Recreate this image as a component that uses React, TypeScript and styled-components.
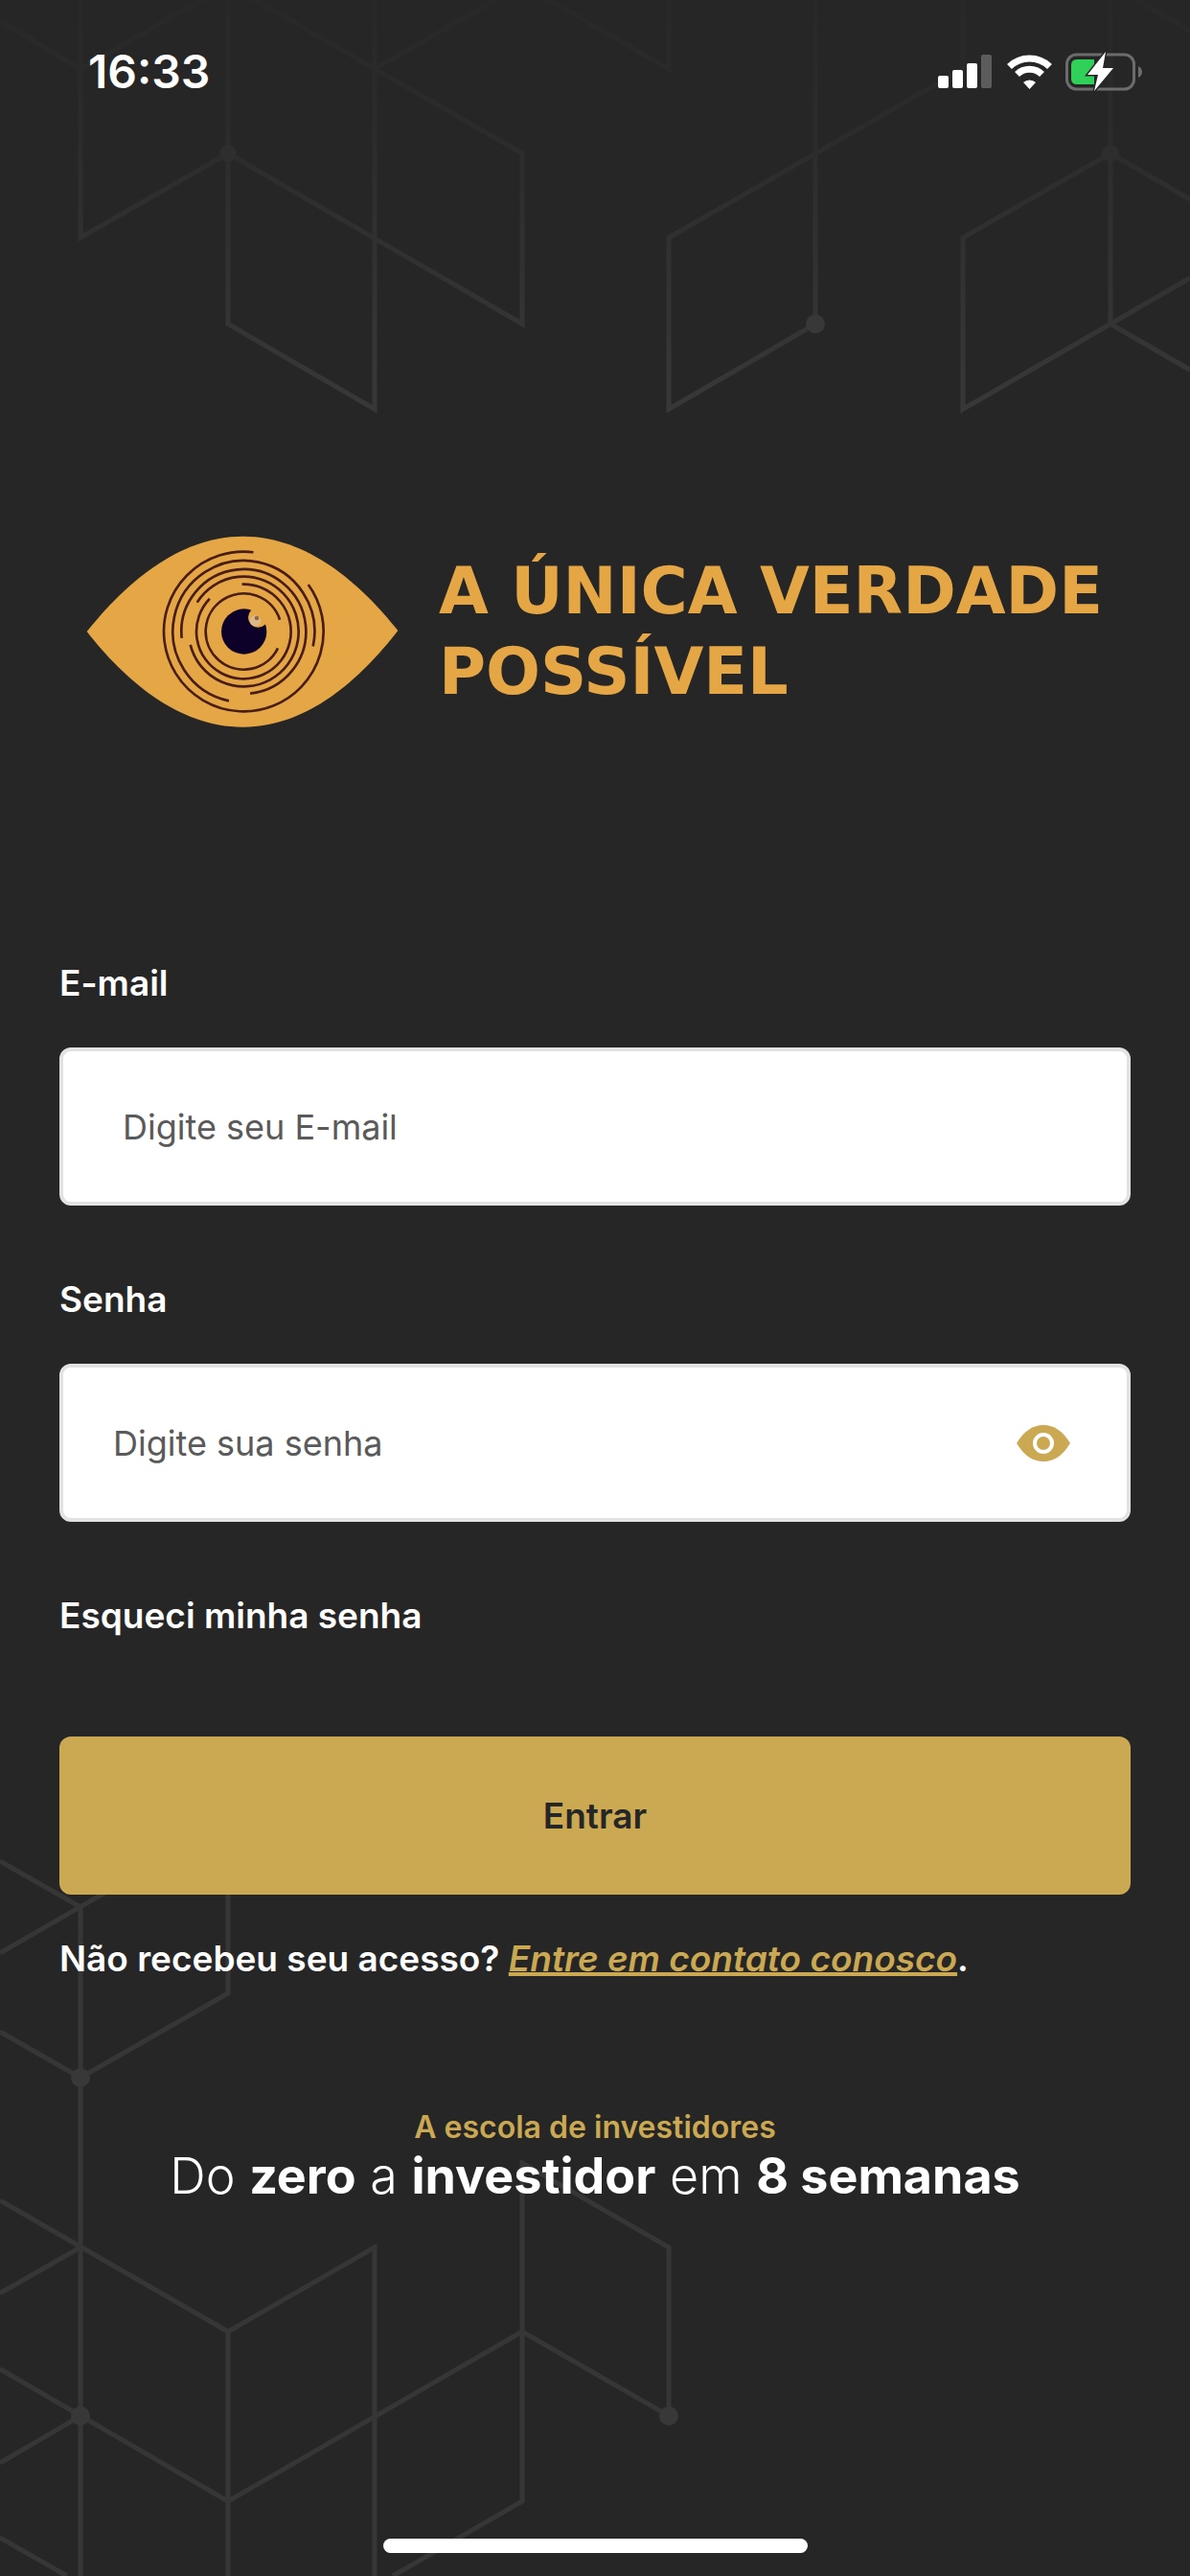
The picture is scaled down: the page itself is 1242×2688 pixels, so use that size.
import React, { useState } from "react";
import styled, { createGlobalStyle } from "styled-components";

const gold = "#cba852";
const logoGold = "#e5a746";
const ink = "#262626";

const GlobalStyle = createGlobalStyle`
  * { box-sizing: border-box; }
  body {
    margin: 0;
    background: ${ink};
    color: #fff;
    font-family: Inter, "Liberation Sans", sans-serif;
  }
`;

const Screen = styled.div`
  position: relative;
  display: flex;
  flex-direction: column;
  min-height: 100vh;
  overflow: hidden;
`;

const Pattern = styled.svg<{ $edge: "top" | "bottom" }>`
  position: absolute;
  z-index: -1;
  left: 0;
  ${(p) => p.$edge}: 0;
  width: 100%;
  fill: none;
  stroke: #363636;
  stroke-width: 5;
`;

const StatusBar = styled.header`
  display: flex;
  align-items: center;
  justify-content: space-between;
  height: 150px;
  padding: 0 50px 0 92px;
`;

const Time = styled.time`
  font-size: 48px;
  line-height: 60px;
  font-weight: 600;
`;

const StatusIcons = styled.div`
  display: flex;
  align-items: center;
  gap: 14px;
`;

const Brand = styled.div`
  display: flex;
  align-items: center;
  gap: 42px;
  padding: 409px 90px 0;
`;

const BrandName = styled.h1`
  margin: 0;
  color: ${logoGold};
  font-family: "DejaVu Sans", Inter, sans-serif;
  font-size: 67px;
  line-height: 84px;
  font-weight: 700;
  white-space: nowrap;
`;

const Form = styled.form`
  display: flex;
  flex-direction: column;
  padding: 245px 62px 0;
`;

const Label = styled.label`
  font-size: 37px;
  line-height: 44px;
  font-weight: 600;
  margin-bottom: 45px;
`;

const Field = styled.div<{ $inset: number }>`
  display: flex;
  align-items: center;
  height: 165px;
  margin-bottom: 76px;
  padding: 0 58px 0 ${(p) => p.$inset}px;
  border: 4px solid #e2e2e2;
  border-radius: 12px;
  background: #fff;
`;

const TextInput = styled.input`
  flex: 1;
  min-width: 0;
  height: 100%;
  padding: 0;
  border: 0;
  outline: 0;
  background: transparent;
  color: ${ink};
  font: 400 36px/44px Inter, "Liberation Sans", sans-serif;
  &::placeholder { color: #5a5a5a; opacity: 1; }
`;

const IconButton = styled.button`
  display: flex;
  padding: 0;
  border: 0;
  background: none;
  cursor: pointer;
`;

const TextLink = styled.a`
  align-self: flex-start;
  color: #fff;
  font-size: 37px;
  line-height: 44px;
  font-weight: 600;
  text-decoration: none;
`;

const Submit = styled.button`
  height: 165px;
  margin-top: 104px;
  border: 0;
  border-radius: 12px;
  background: ${gold};
  color: ${ink};
  font: 600 37px/44px Inter, "Liberation Sans", sans-serif;
  cursor: pointer;
`;

const Contact = styled.p`
  margin: 45px 0 0;
  padding: 0 62px;
  font-size: 37px;
  line-height: 44px;
  font-weight: 600;
  a {
    color: ${gold};
    font-style: italic;
    text-decoration-thickness: 4px;
    text-underline-offset: 1px;
  }
`;

const Slogan = styled.section`
  margin-top: 135px;
  text-align: center;
`;

const Kicker = styled.p`
  margin: 0;
  color: ${gold};
  font-size: 32px;
  line-height: 38px;
  font-weight: 600;
`;

const Headline = styled.h2`
  margin: 0;
  font-size: 52px;
  line-height: 64px;
  font-weight: 300;
  strong { font-weight: 700; }
`;

const HomeIndicator = styled.div`
  align-self: center;
  width: 443px;
  height: 15px;
  margin: auto 0 24px;
  border-radius: 8px;
  background: #fff;
`;

const TopPattern = () => (
  <Pattern $edge="top" viewBox="0 0 1242 440" aria-hidden="true">
    <defs>
      <linearGradient id="fade" gradientUnits="userSpaceOnUse" x1="0" y1="0" x2="0" y2="430">
        <stop offset="0" stopColor="#282828" />
        <stop offset="0.3" stopColor="#2b2b2b" />
        <stop offset="1" stopColor="#383838" />
      </linearGradient>
    </defs>
    <g stroke="url(#fade)">
      <path d="M84 0V248L238 160 545 338V160L238-16M238 0V338L391 427V0" />
      <path d="M0 22L84 72 238-16M391 72L545-16 698 72V0" />
      <path d="M851 0V338L698 427V248L1005 72V0" />
      <path d="M1159 0V338L1005 427V248L1159 160 1242 208M1242 290L1159 338 1242 386M1159-16L1242 32" />
    </g>
    <circle cx="851" cy="338" r="10" fill="#383838" stroke="none" />
    <circle cx="238" cy="160" r="9" fill="#2e2e2e" stroke="none" />
    <circle cx="1159" cy="160" r="9" fill="#2e2e2e" stroke="none" />
  </Pattern>
);

const BottomPattern = () => (
  <Pattern $edge="bottom" viewBox="0 1888 1242 800" aria-hidden="true">
    <path d="M0 1942L84 1990V2688M0 2038L238 1901V2080L84 2168 0 2120" />
    <path d="M0 2296L238 2433 391 2345V2688M238 2433V2688M84 2345L0 2393" />
    <path d="M0 2472L238 2610 545 2433 698 2521V2345L545 2257V2610L410 2688M84 2521L0 2570M0 2648L70 2688" />
    <g fill="#383838" stroke="none">
      <circle cx="84" cy="2168" r="10" />
      <circle cx="84" cy="2521" r="10" />
      <circle cx="698" cy="2521" r="10" />
    </g>
  </Pattern>
);

const SignalIcon = () => (
  <svg width="58" height="36" viewBox="0 0 58 36" fill="#fff" aria-hidden="true">
    <rect x="0" y="22" width="11" height="13" rx="2" />
    <rect x="15" y="16" width="11" height="19" rx="2" />
    <rect x="30" y="9" width="11" height="26" rx="2" />
    <rect x="45" y="0" width="11" height="35" rx="2" fill="#5c5c5c" />
  </svg>
);

const WifiIcon = () => (
  <svg width="47" height="36" viewBox="0 0 47 36" aria-hidden="true">
    <g fill="none" stroke="#fff" strokeWidth="7">
      <path d="M2.5 12.5a30 30 0 0 1 42 0" />
      <path d="M10.5 20.5a18.5 18.5 0 0 1 26 0" />
    </g>
    <path d="M23.500 36l-6.500-7a9.500 9.500 0 0 1 13 0z" fill="#fff" />
  </svg>
);

const BatteryIcon = () => (
  <svg width="80" height="42" viewBox="0 0 80 42" aria-hidden="true">
    <rect x="1.500" y="3" width="70" height="36" rx="10" fill="none" stroke="#6c6c6c" strokeWidth="3" />
    <path d="M76 15q4 2 4 6t-4 6z" fill="#6c6c6c" />
    <path d="M12 8H30V34H12Q6 34 6 28V14Q6 8 12 8z" fill="#30d158" />
    <path d="M42 0L23 24H34L30 41 50 17H39z" fill="#fff" stroke={ink} strokeWidth="3" paintOrder="stroke" />
  </svg>
);

const arc = (r: number, from: number, to: number) => {
  const at = (deg: number) => {
    const a = (deg * Math.PI) / 180;
    return `${525 + r * Math.cos(a)} ${356 + r * Math.sin(a)}`;
  };
  return `M${at(from)}A${r} ${r} 0 1 1 ${at(to)}`;
};

const rings: [number, number, number][] = [
  [250, -36, 277],
  [222, 102, 372],
  [195, 174, 444],
  [172, 212, 526],
  [148, -92, 224],
  [119, 26, 342],
];

const EyeLogo = () => (
  <svg width="326" height="200" viewBox="32 56 978 600" aria-hidden="true">
    <path
      d="M34 356C150 210 320 58 522 58S890 205 1008 353C890 505 725 655 522 655S150 505 34 356z"
      fill={logoGold}
    />
    <g fill="none" stroke="#4a1d14" strokeWidth="8">
      {rings.map(([r, from, to]) => (
        <path key={r} d={arc(r, from, to)} />
      ))}
    </g>
    <circle cx="526" cy="356" r="71" fill="#0d0029" />
    <circle cx="570" cy="312" r="31" fill={logoGold} />
    <circle cx="562" cy="322" r="17" fill="#d9b98a" />
    <circle cx="566" cy="314" r="7" fill="#8f6a3c" />
  </svg>
);

const EyeIcon = () => (
  <svg width="58" height="40" viewBox="0 0 58 40" aria-hidden="true">
    <path d="M1 20C9 7 18 1 29 1s20 6 28 19c-8 13-17 19-28 19S9 33 1 20z" fill={gold} />
    <circle cx="29" cy="20" r="9" fill="none" stroke="#fff" strokeWidth="4" />
  </svg>
);

export default function App() {
  const [visible, setVisible] = useState(false);
  return (
    <>
      <GlobalStyle />
      <Screen>
        <TopPattern />
        <BottomPattern />
        <StatusBar>
          <Time>16:33</Time>
          <StatusIcons>
            <SignalIcon />
            <WifiIcon />
            <BatteryIcon />
          </StatusIcons>
        </StatusBar>
        <main>
          <Brand>
            <EyeLogo />
            <BrandName>
              A ÚNICA VERDADE
              <br />
              POSSÍVEL
            </BrandName>
          </Brand>
          <Form onSubmit={(e) => e.preventDefault()}>
            <Label htmlFor="email">E-mail</Label>
            <Field $inset={62}>
              <TextInput id="email" type="email" placeholder="Digite seu E-mail" />
            </Field>
            <Label htmlFor="password">Senha</Label>
            <Field $inset={52}>
              <TextInput id="password" type={visible ? "text" : "password"} placeholder="Digite sua senha" />
              <IconButton type="button" aria-label="Mostrar senha" onClick={() => setVisible(!visible)}>
                <EyeIcon />
              </IconButton>
            </Field>
            <TextLink href="#senha">Esqueci minha senha</TextLink>
            <Submit type="submit">Entrar</Submit>
          </Form>
          <Contact>
            Não recebeu seu acesso? <a href="#contato">Entre em contato conosco</a>.
          </Contact>
          <Slogan>
            <Kicker>A escola de investidores</Kicker>
            <Headline>
              Do <strong>zero</strong> a <strong>investidor</strong> em <strong>8 semanas</strong>
            </Headline>
          </Slogan>
        </main>
        <HomeIndicator />
      </Screen>
    </>
  );
}
